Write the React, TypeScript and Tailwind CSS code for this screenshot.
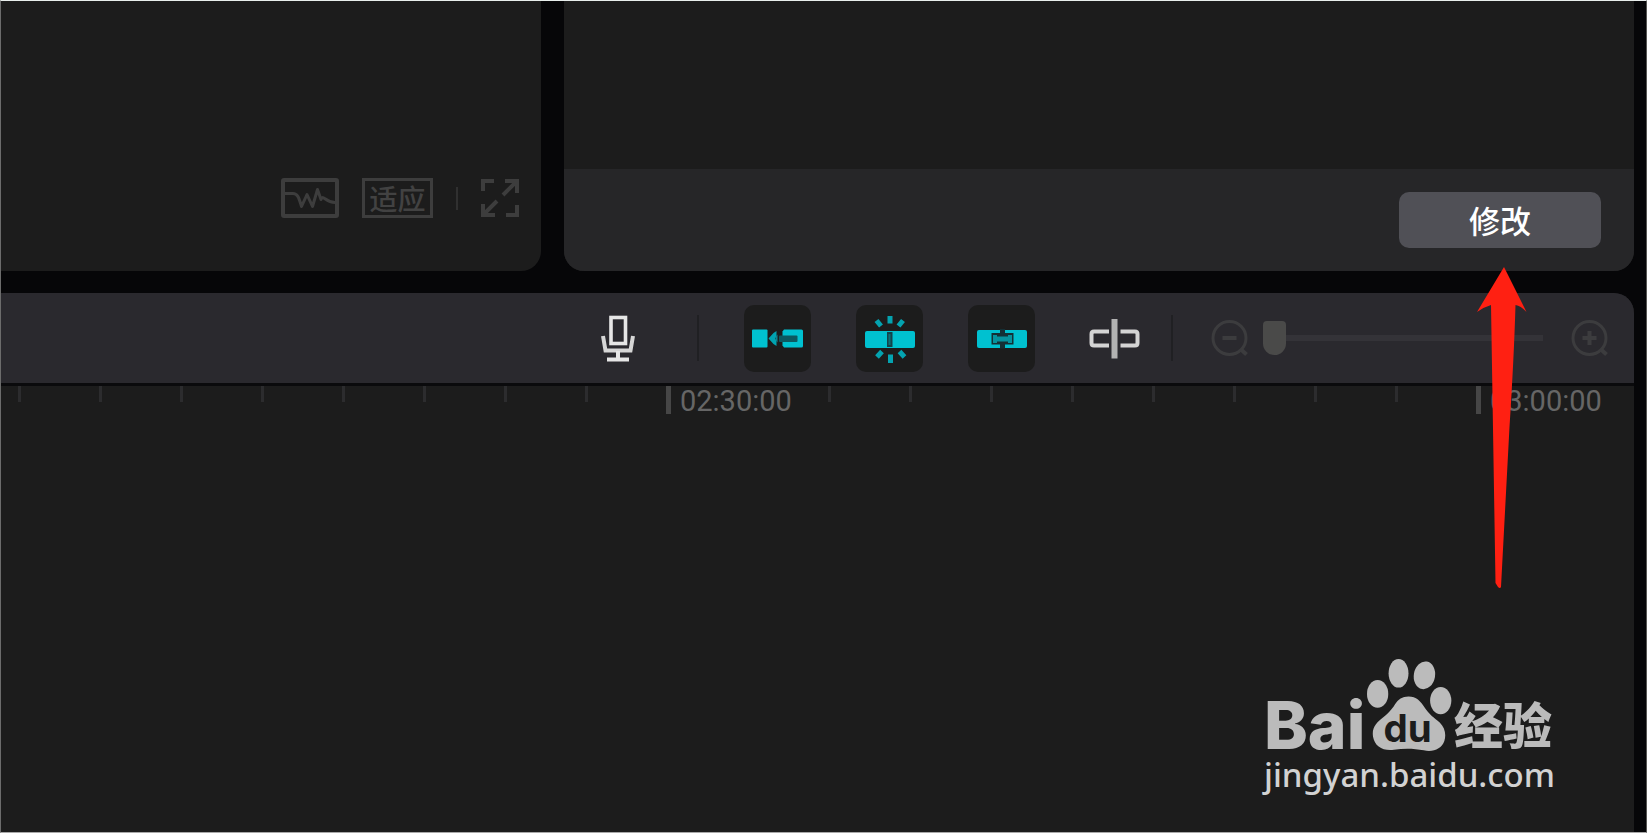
import type { ReactNode } from "react";

interface ToolButtonProps {
	label: string;
	active?: boolean;
	children: ReactNode;
}

const ToolButton = ({ label, active, children }: ToolButtonProps) => {
	return (
		<button
			type="button"
			aria-label={label}
			className={`size-[67px] shrink-0 rounded-[10px] ${active ? "bg-[#1c1c1c]" : ""}`}
		>
			<svg viewBox="0 0 67 67" className="size-full" fill="none">
				{children}
			</svg>
		</button>
	);
};

const Separator = () => <div className="h-[46px] w-[2px] shrink-0 bg-[#202023]" />;

const PreviewPanel = () => {
	return (
		<section className="flex w-[540px] shrink-0 items-end justify-end rounded-br-[20px] bg-[#1c1c1c] pr-[22px] pb-[53px]">
			<div className="flex items-center gap-[23px] text-[#3d3d3d]">
				<button type="button" aria-label="波形">
					<svg
						viewBox="0 0 58 40"
						className="h-[40px] w-[58px]"
						fill="none"
						stroke="currentColor"
						strokeWidth="3"
					>
						<rect x="2" y="2" width="54" height="36" rx="1" strokeWidth="4" />
						<path
							d="M4 15.500h8c5 0 6 5 8.500 13l5.500-12 5.500 12 5-17 3.500 10c2-6 4 3 14 3"
							strokeLinejoin="round"
						/>
					</svg>
				</button>
				<button
					type="button"
					className="h-[40px] w-[71px] border-3 border-[#3d3d3d] text-[28px] leading-[32px] font-medium text-[#424242]"
				>
					适应
				</button>
				<div className="h-[23px] w-[2px] bg-[#303030]" />
				<button type="button" aria-label="全屏">
					<svg
						viewBox="0 0 38 38"
						className="size-[38px]"
						fill="none"
						stroke="currentColor"
						strokeWidth="4"
					>
						<path d="M2 12V2h11M24 2h12v12M36 2 22 16M36 26v10H25M14 36H2V25M2 36l14-14" />
					</svg>
				</button>
			</div>
		</section>
	);
};

const PropertiesPanel = () => {
	return (
		<section className="flex min-w-0 flex-1 flex-col overflow-hidden rounded-b-[20px] bg-[#1c1c1c]">
			<div className="flex-1" />
			<footer className="flex h-[102px] items-center justify-end bg-[#262628] pr-[33px]">
				<button
					type="button"
					className="h-[56px] w-[202px] rounded-[10px] bg-[#505056] text-[31px] leading-[54px] font-medium text-white"
				>
					修改
				</button>
			</footer>
		</section>
	);
};

const ZoomIcon = ({ path }: { path: string }) => {
	return (
		<svg
			viewBox="0 0 40 40"
			className="size-[40px]"
			fill="none"
			stroke="currentColor"
			strokeWidth="3"
		>
			<circle cx="19.500" cy="20" r="16.500" />
			<path d="M31 31.500l5.500 5" strokeWidth="4" />
			<path d={path} strokeWidth="4" />
		</svg>
	);
};

const Toolbar = () => {
	return (
		<div className="flex h-[90px] items-center justify-end bg-[#2a292e] pr-6">
			<div className="flex items-center gap-[45px]">
				<ToolButton label="录音">
					<rect x="26" y="12.500" width="14.500" height="26" stroke="#e6e6e6" strokeWidth="3.6" />
					<path d="M18 31 20.500 45.500h25l2.500-14.500" stroke="#d6d6d6" strokeWidth="4" />
					<path d="M33 46v8M22 54.500h22" stroke="#e6e6e6" strokeWidth="4" />
				</ToolButton>
				<Separator />
				<ToolButton label="主轨磁吸" active>
					<rect x="8" y="24.500" width="15.500" height="18" rx="1" fill="#00c1d0" />
					<path d="M24.500 33.500l5-5.500 3-2v5.500l-1.500 2 1.500 2V41l-3-2z" fill="#00a3b0" />
					<path d="M33.500 29.500v8l-2-2.500v-3z" fill="#0a8893" />
					<path d="M40 24.500h17.500q1.500 0 1.500 1.500v15q0 1.500-1.500 1.500H40l-1.500-2V26.500z" fill="#00c1d0" />
					<rect x="35" y="30.500" width="18.500" height="6.500" rx="1" fill="#0c5960" />
				</ToolButton>
				<ToolButton label="自动吸附" active>
					<rect x="9" y="26" width="50" height="17" rx="2" fill="#00c1d0" />
					<rect x="31" y="27" width="5.500" height="15" fill="#14424a" />
					<rect x="32.500" y="29" width="2" height="11" fill="#0a7078" />
					<path
						d="M34 11v7.500M20.500 15.500l4.500 5.500M47 15.500l-4.500 5.500M21 52l5-5.500M48.500 52l-5-5.500M34.500 49.500V58"
						stroke="#04a3b0"
						strokeWidth="5"
					/>
				</ToolButton>
				<ToolButton label="联动" active>
					<rect x="9" y="25" width="50" height="18" rx="2" fill="#00c1d0" />
					<path d="M32 24h5v4h8.500v11.500H37V43.500h-5v-4h-8.500V28H32z" fill="#143035" />
					<path d="M25 30h4v1.500h11V30h4v8h-4v-1.500H29V38h-4z" fill="#06929d" />
				</ToolButton>
				<ToolButton label="分割">
					<path
						d="M29 26.500H14q-2.500 0-2.500 2.500v9q0 2.500 2.500 2.500h15M40.500 26.500H55q2.500 0 2.500 2.500v9q0 2.500-2.500 2.500H40.500"
						stroke="#d4d4d4"
						strokeWidth="4"
					/>
					<rect x="31.500" y="14" width="6" height="39.500" fill="#b2b2b2" />
				</ToolButton>
			</div>
			<div className="mr-[37px] ml-6">
				<Separator />
			</div>
			<button type="button" aria-label="缩小" className="mr-[13px] shrink-0 text-[#3c3c3e]">
				<ZoomIcon path="M12.500 20h14" />
			</button>
			<input
				type="range"
				aria-label="时间线缩放"
				min={0}
				max={100}
				defaultValue={0}
				className="mr-[27px] h-[34px] w-[280px] shrink-0 appearance-none bg-transparent [&::-webkit-slider-runnable-track]:h-[6px] [&::-webkit-slider-runnable-track]:bg-[#343338] [&::-webkit-slider-thumb]:-mt-[14px] [&::-webkit-slider-thumb]:h-[34px] [&::-webkit-slider-thumb]:w-[23px] [&::-webkit-slider-thumb]:appearance-none [&::-webkit-slider-thumb]:rounded-t-[4px] [&::-webkit-slider-thumb]:rounded-b-[12px] [&::-webkit-slider-thumb]:bg-[#4a4a49]"
			/>
			<button type="button" aria-label="放大" className="shrink-0 text-[#3c3c3e]">
				<ZoomIcon path="M12.500 20h14M19.500 13v14" />
			</button>
		</div>
	);
};

const LabelTick = ({ time }: { time: string }) => {
	return (
		<div className="flex w-[162px] shrink-0 gap-[9px]">
			<div className="h-[28px] w-[5px] shrink-0 bg-[#464646]" />
			<span className="font-[Roboto] text-[29px] leading-[30px] text-[#666666]">{time}</span>
		</div>
	);
};

const Ticks = ({ count }: { count: number }) => {
	return Array.from({ length: count }, (_, i) => (
		<div key={i} className="w-[81px] shrink-0">
			<div className="h-[16px] w-[3px] bg-[#2c2c2e]" />
		</div>
	));
};

const Ruler = () => {
	return (
		<div className="flex h-[35px] overflow-hidden border-t-3 border-[#0a0a0c] pl-[17px]">
			<Ticks count={8} />
			<LabelTick time="02:30:00" />
			<Ticks count={8} />
			<LabelTick time="03:00:00" />
		</div>
	);
};

const Pointer = () => {
	return (
		<svg
			viewBox="0 0 50 322"
			className="pointer-events-none absolute top-[266px] right-[119px] h-[322px] w-[50px]"
			fill="#ff2012"
		>
			<path d="M27 0 49.500 45Q44 39 38.500 38Q37 90 32.500 160L24 320Q23 322 21 320L18.500 316L14 38Q7 40 0 45Z" />
		</svg>
	);
};

const Watermark = () => {
	return (
		<div className="pointer-events-none absolute right-[89px] bottom-[34px] w-[293px] text-[#bbbbbb]">
			<div className="flex items-end justify-between pr-[5px]">
				<span className="font-[Inter] text-[66px] leading-[52px] font-extrabold">Bai</span>
				<svg viewBox="376 55 256 277" className="h-[92px] w-[85px] shrink-0" fill="currentColor">
					<ellipse cx="408" cy="160" rx="32" ry="42" />
					<ellipse cx="471" cy="98" rx="30" ry="43" />
					<ellipse cx="549" cy="104" rx="32" ry="42" transform="rotate(10 549 104)" />
					<ellipse cx="598" cy="180" rx="32" ry="41" />
					<path d="M501 168c24 0 36 14 48 32 14 22 30 32 46 46 16 16 20 36 14 56-8 24-34 34-62 28-30-6-60-6-90-2-34 4-58-10-63-40-4-28 12-42 32-58 16-14 24-22 34-38 10-15 22-24 41-24z" />
					<text
						x="498"
						y="306"
						textAnchor="middle"
						fill="#1c1c1c"
						className="font-[Inter] text-[116px] font-bold"
					>
						du
					</text>
				</svg>
				<span className="text-[49px] leading-[57px] font-black">经验</span>
			</div>
			<div className="font-['Noto_Sans'] text-[33px] leading-[47px] font-medium text-[#d2d2d2]">
				jingyan.baidu.com
			</div>
		</div>
	);
};

const App = () => {
	return (
		<div className="relative flex min-h-screen flex-col overflow-hidden border border-t-[#e8eeec] border-r-[#565654] border-b-[#a9a9a9] border-l-[#6c6c6c] bg-[#060608] font-['Noto_Sans_CJK_SC',sans-serif]">
			<div className="flex h-[270px] gap-[23px] pr-[12px]">
				<PreviewPanel />
				<PropertiesPanel />
			</div>
			<section className="mt-[22px] mr-[12px] flex flex-1 flex-col overflow-hidden rounded-tr-[20px] bg-[#1c1c1c]">
				<Toolbar />
				<Ruler />
			</section>
			<Watermark />
			<Pointer />
		</div>
	);
};

export default App;
